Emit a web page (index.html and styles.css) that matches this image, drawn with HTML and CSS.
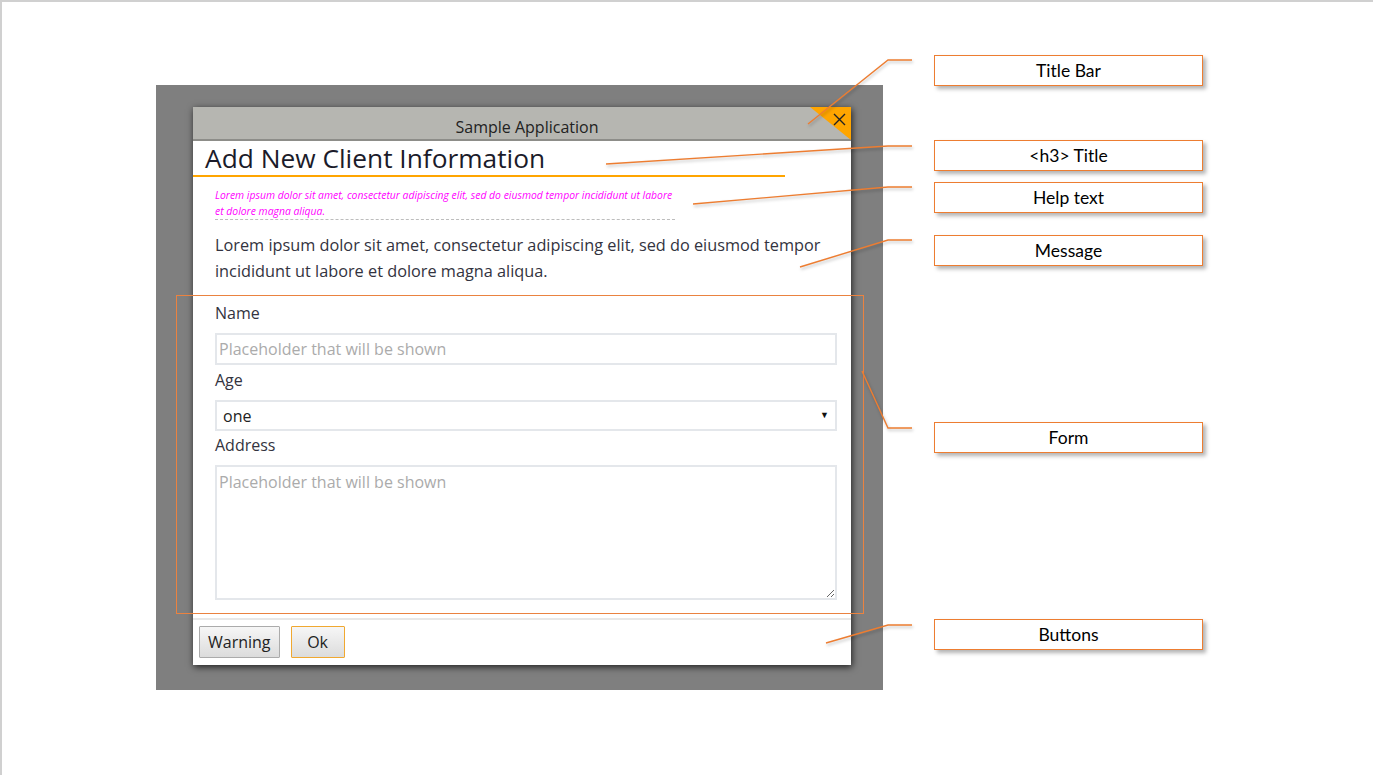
FILE: index.html
```html
<!DOCTYPE html>
<html lang="en">
<head>
<meta charset="utf-8">
<title>Dialog anatomy</title>
<link rel="stylesheet" href="styles.css">
</head>
<body>
<div class="canvas">
  <div class="backdrop">
    <div class="dialog">
      <div class="titlebar">
        <span class="title">Sample Application</span>
        <button class="close" type="button" aria-label="Close">
          <svg class="close-x" width="13" height="13" viewBox="0 0 13 13"><path d="M1 1 L12 12 M12 1 L1 12" stroke="#222" stroke-width="1.4" fill="none"/></svg>
        </button>
      </div>
      <h3 class="heading">Add New Client Information</h3>
      <p class="help">Lorem ipsum dolor sit amet, consectetur adipiscing elit, sed do eiusmod tempor incididunt ut labore et dolore magna aliqua.</p>
      <p class="message">Lorem ipsum dolor sit amet, consectetur adipiscing elit, sed do eiusmod tempor incididunt ut labore et dolore magna aliqua.</p>
      <form class="form">
        <label class="label" for="name">Name</label>
        <input class="field" id="name" type="text" placeholder="Placeholder that will be shown">
        <label class="label label-age" for="age">Age</label>
        <div class="select-wrap">
          <select class="field select" id="age"><option>one</option><option>two</option></select>
          <span class="arrow">&#9660;</span>
        </div>
        <label class="label label-address" for="address">Address</label>
        <textarea class="field area" id="address" placeholder="Placeholder that will be shown"></textarea>
      </form>
      <div class="buttons">
        <button class="btn" type="button">Warning</button>
        <button class="btn btn-ok" type="button">Ok</button>
      </div>
    </div>
  </div>

  <div class="form-outline"></div>

  <svg class="leaders" width="1373" height="775" viewBox="0 0 1373 775">
    <g fill="none" stroke="#ed7d31" stroke-width="1.4">
      <polyline points="912,60 888,60 808,124"/>
      <polyline points="912,146 888,146 606,164"/>
      <polyline points="912,187 888,187 693,204"/>
      <polyline points="912,240 888,240 800,267"/>
      <polyline points="912,428 888,428 862,371"/>
      <polyline points="912,625 888,625 826,643"/>
    </g>
  </svg>

  <div class="callout c-titlebar">Title Bar</div>
  <div class="callout c-h3">&lt;h3&gt; Title</div>
  <div class="callout c-help">Help text</div>
  <div class="callout c-message">Message</div>
  <div class="callout c-form">Form</div>
  <div class="callout c-buttons">Buttons</div>
</div>
</body>
</html>
```
FILE: styles.css
```css
* { box-sizing: border-box; }

body {
  margin: 0;
  background: #fff;
}

.canvas {
  position: relative;
  width: 1373px;
  height: 775px;
  overflow: hidden;
  background: #fff;
  box-shadow: inset 2px 2px 0 #d0d0d0;
  font-family: "Open Sans", "Noto Sans", sans-serif;
  padding: 85px 0 0 156px;
}

.backdrop {
  width: 727px;
  height: 605px;
  background: #7f7f7f;
  padding: 22px 0 0 37px;
}

.dialog {
  width: 658px;
  height: 558px;
  background: #fff;
  box-shadow: 1px 2px 7px rgba(0, 0, 0, 0.75);
  display: flex;
  flex-direction: column;
}

.titlebar {
  position: relative;
  height: 34px;
  background: #b6b6b1;
  border-bottom: 2px solid #8d8d89;
  display: flex;
  justify-content: center;
  padding: 8px 0 0 10px;
  font-size: 16px;
  line-height: 24px;
  color: #222;
}

.close {
  position: absolute;
  top: 0;
  right: 0;
  width: 41px;
  height: 33px;
  border: 0;
  padding: 0;
  background: #ffa500;
  clip-path: polygon(0 0, 100% 0, 100% 100%);
  cursor: pointer;
}

.close-x {
  position: absolute;
  top: 6px;
  right: 5px;
}

.heading {
  margin: 0;
  width: 592px;
  padding-left: 12px;
  font-size: 26.3px;
  font-weight: 400;
  line-height: 34px;
  color: #1b1b2a;
  border-bottom: 2px solid #ffa500;
}

.help {
  margin: 11px 0 0 22px;
  width: 460px;
  font-size: 10.4px;
  font-style: italic;
  line-height: 15.5px;
  color: #ff00ff;
  border-bottom: 1px dashed #bdbdbd;
}

.message {
  margin: 12px 0 0 22px;
  width: 622px;
  font-size: 16.3px;
  line-height: 26px;
  color: #333340;
}

.form {
  margin: 18px 14px 0 22px;
  display: flex;
  flex-direction: column;
}

.label {
  font-size: 16px;
  line-height: 22px;
  color: #333340;
  margin-bottom: 9px;
}

.label-age { margin-top: 4px; }
.label-address { margin-top: 3px; margin-bottom: 9px; }

.field {
  width: 100%;
  border: 2px solid #e4e7eb;
  background: #fff;
  font-family: "Open Sans", "Noto Sans", sans-serif;
  font-size: 16px;
  color: #222;
  outline: none;
}

.field::placeholder { color: #ababab; opacity: 1; }

input.field {
  height: 32px;
  padding: 0 2px;
}

.select-wrap {
  position: relative;
}

.select {
  height: 31px;
  padding: 0 6px;
  appearance: none;
  -webkit-appearance: none;
  border-radius: 0;
}

.arrow {
  position: absolute;
  right: 8px;
  top: 8px;
  font-size: 9px;
  line-height: 14px;
  color: #111;
  pointer-events: none;
}

.area {
  height: 135px;
  padding: 4px 2px;
  resize: vertical;
  line-height: 22px;
}

.buttons {
  margin-top: 18px;
  border-top: 2px solid #e8e8e8;
  padding: 6px 6px 0;
  display: flex;
  gap: 11px;
}

.btn {
  height: 32px;
  padding: 0 8px;
  border: 1px solid #ababab;
  border-radius: 1px;
  background: linear-gradient(#f6f6f6, #dcdcdc);
  font-family: "Open Sans", "Noto Sans", sans-serif;
  font-size: 16px;
  color: #222;
}

.btn-ok {
  width: 54px;
  border: 1px solid #f0a830;
}

.form-outline {
  position: absolute;
  left: 176px;
  top: 295px;
  width: 688px;
  height: 319px;
  border: 1px solid #ea8240;
  pointer-events: none;
}

.leaders {
  position: absolute;
  left: 0;
  top: 0;
  pointer-events: none;
  filter: drop-shadow(1px 2px 1.5px rgba(0, 0, 0, 0.25));
}

.callout {
  position: absolute;
  left: 934px;
  width: 269px;
  height: 31px;
  background: #fff;
  border: 1.5px solid #ed7d31;
  box-shadow: 3px 3px 4px rgba(0, 0, 0, 0.3);
  display: flex;
  align-items: center;
  justify-content: center;
  font-family: Lato, "Open Sans", sans-serif;
  font-size: 17.5px;
  color: #000;
}

.c-titlebar { top: 55px; }
.c-h3 { top: 140px; }
.c-help { top: 182px; }
.c-message { top: 235px; }
.c-form { top: 422px; }
.c-buttons { top: 619px; }
```
